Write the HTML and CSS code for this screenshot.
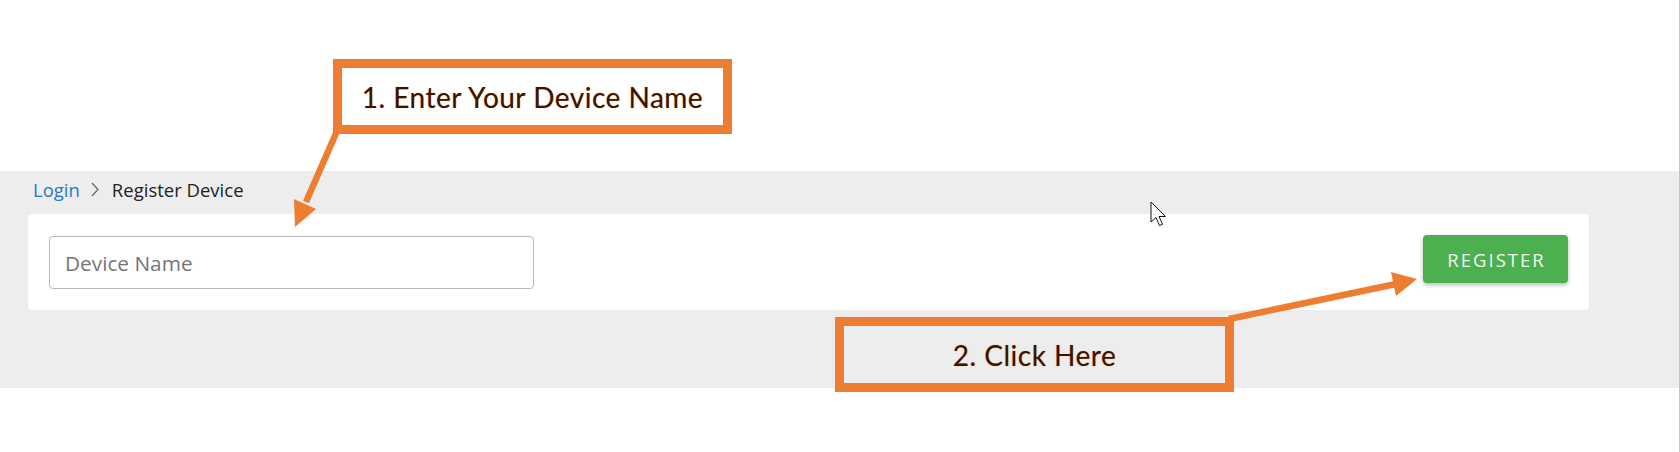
FILE: index.html
```html
<!DOCTYPE html>
<html lang="en">
<head>
<meta charset="utf-8">
<title>Register Device</title>
<link rel="stylesheet" href="styles.css">
</head>
<body>
<div class="page">
  <div class="top-space"></div>
  <section class="band">
    <nav class="crumbs">
      <a class="crumb-link" href="#">Login</a>
      <svg class="chev" width="10" height="15" viewBox="0 0 10 15"><polyline points="2,1 8,7.5 2,14" fill="none" stroke="#6b6b6b" stroke-width="1.3"/></svg>
      <span class="crumb-current">Register Device</span>
    </nav>
    <div class="card">
      <input class="field" type="text" placeholder="Device Name">
      <button class="btn" type="button">REGISTER</button>
    </div>
  </section>

  <div class="callout callout-one">1. Enter Your Device Name</div>
  <div class="callout callout-two">2. Click Here</div>

  <svg class="arrows" width="1680" height="452" viewBox="0 0 1680 452">
    <line x1="337" y1="131" x2="306" y2="202" stroke="#ed7d31" stroke-width="6.5"/>
    <polygon points="295,227 316,209 294,199" fill="#ed7d31"/>
    <line x1="1229" y1="319" x2="1396" y2="284" stroke="#ed7d31" stroke-width="6.5"/>
    <polygon points="1417,279 1396,296 1391,272" fill="#ed7d31"/>
  </svg>

  <svg class="cursor" width="18" height="27" viewBox="0 0 18 27">
    <path d="M1 1 L1 21 L6 16.5 L9.5 24.5 L12.5 23.2 L9 15.5 L15.5 15.5 Z" fill="#fff" stroke="#111" stroke-width="1" stroke-linejoin="round"/>
  </svg>
</div>
</body>
</html>
```

FILE: styles.css
```css
* {
  box-sizing: border-box;
}

html, body {
  margin: 0;
  padding: 0;
  background: #ffffff;
}

.page {
  position: relative;
  width: 1680px;
  height: 452px;
  overflow: hidden;
  border-right: 1px solid #c4c4c4;
  font-family: "Open Sans", "Noto Sans", sans-serif;
}

.top-space {
  height: 171px;
}

.band {
  background: #ededed;
  padding: 6px 90px 78px 28px;
}

.crumbs {
  display: flex;
  align-items: center;
  height: 24px;
  margin-bottom: 13px;
  padding-left: 5px;
  font-size: 18.5px;
}

.crumb-link {
  color: #2a79be;
  text-decoration: none;
}

.chev {
  margin: 0 12px 0 10px;
}

.crumb-current {
  color: #222222;
}

.card {
  background: #ffffff;
  border-radius: 4px;
  padding: 22px 21px 21px 21px;
  display: flex;
  justify-content: space-between;
  align-items: flex-start;
}

.field {
  width: 485px;
  height: 53px;
  border: 1px solid #b9b9b9;
  border-radius: 4px;
  padding: 0 15px;
  font-family: "Open Sans", "Noto Sans", sans-serif;
  font-size: 20.8px;
  color: #333;
  background: #fff;
  outline: none;
}

.field::placeholder {
  color: #767676;
}

.btn {
  margin-top: -1px;
  width: 145px;
  height: 48px;
  border: none;
  border-radius: 4px;
  background: #4caf50;
  color: #f1f8f1;
  font-family: "Open Sans", "Noto Sans", sans-serif;
  font-size: 18.5px;
  letter-spacing: 2px;
  box-shadow: 0 2px 4px rgba(0, 0, 0, 0.28);
  padding: 0 0 0 2px;
}

.callout {
  position: absolute;
  width: 399px;
  height: 75px;
  border: 9px solid #ed7d31;
  display: flex;
  align-items: center;
  justify-content: center;
  font-family: "Lato", "Open Sans", sans-serif;
  font-size: 28px;
  letter-spacing: 0.5px;
  color: #3a1500;
  text-shadow: 0 0 1px rgba(237, 125, 49, 0.85);
}

.callout-one {
  left: 333px;
  top: 59px;
  background: #ffffff;
}

.callout-two {
  left: 835px;
  top: 317px;
  background: transparent;
}

.arrows {
  position: absolute;
  left: 0;
  top: 0;
  pointer-events: none;
}

.cursor {
  position: absolute;
  left: 1150px;
  top: 201px;
  pointer-events: none;
}
```
